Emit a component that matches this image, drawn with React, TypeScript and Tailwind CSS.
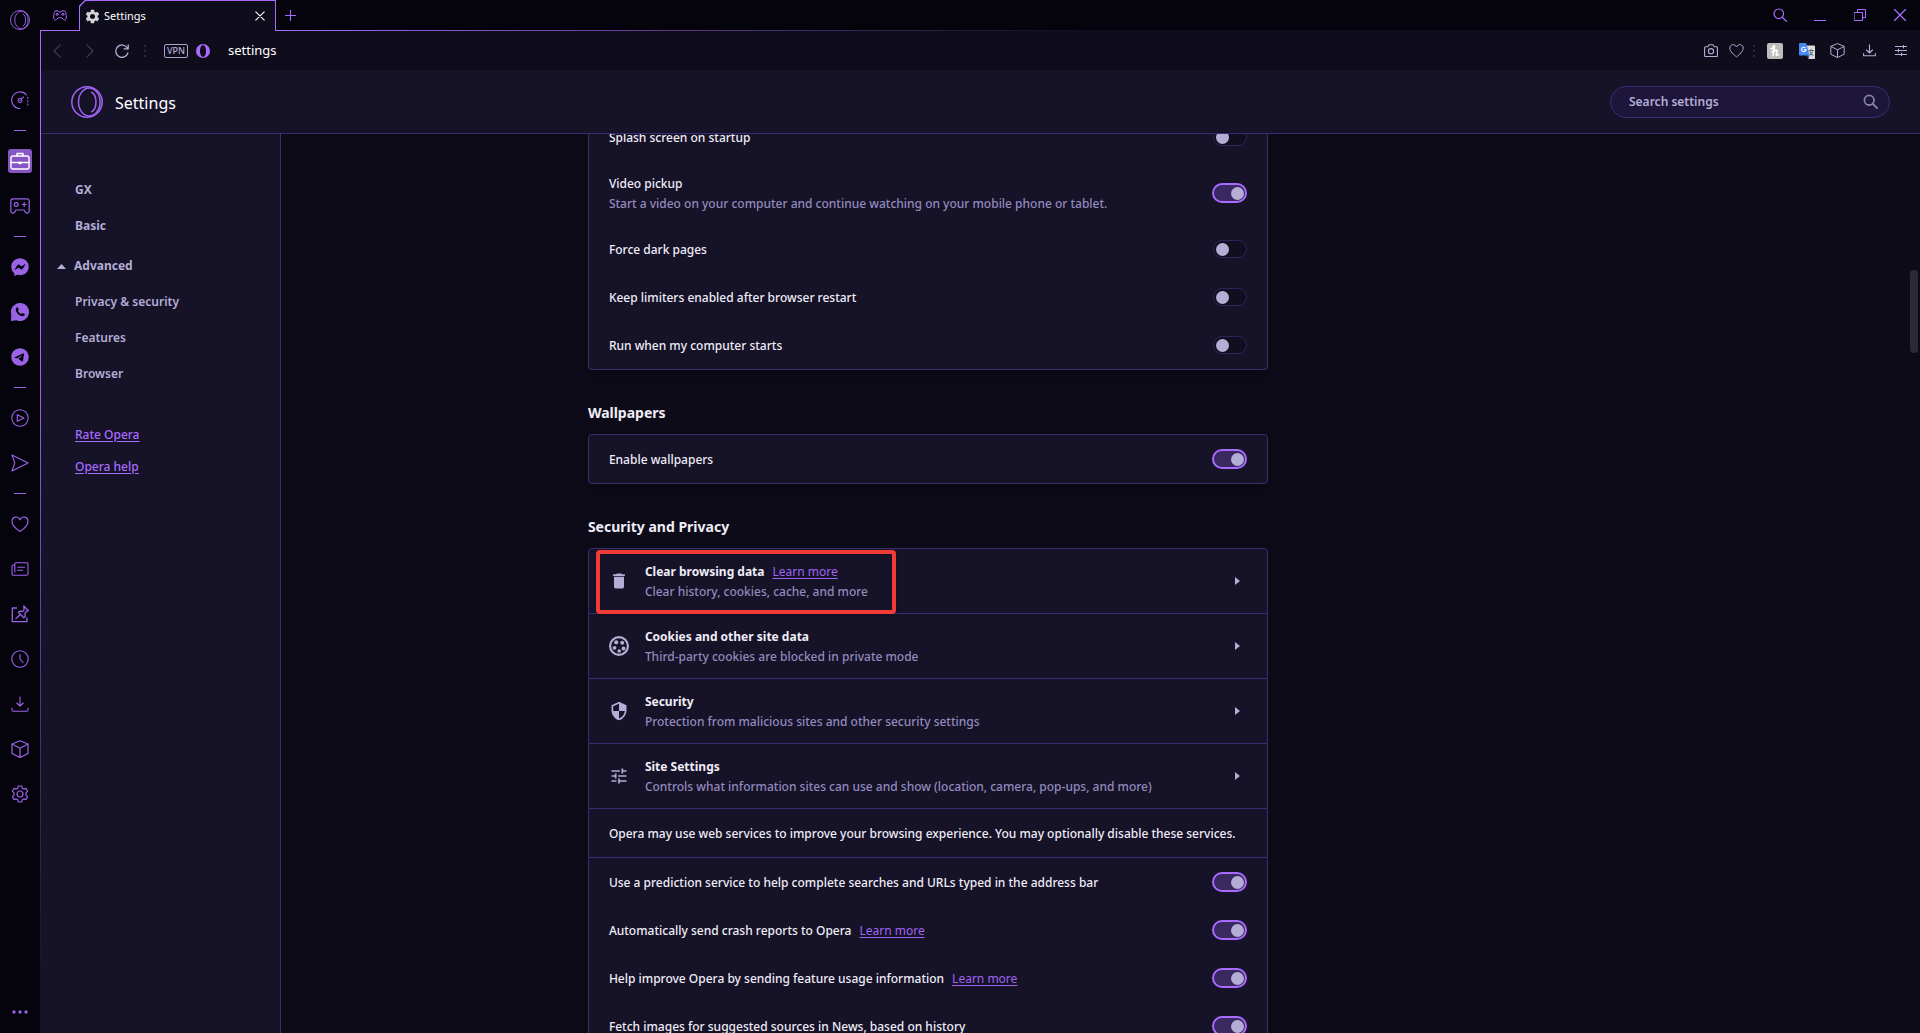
import { useState, type ReactNode } from 'react';
import { MdDelete, MdSecurity, MdTune, MdSettings } from 'react-icons/md';
import { FaFacebookMessenger, FaTelegram } from 'react-icons/fa6';

type IconProps = { w: number; h?: number; className?: string; sw?: number; children: ReactNode };

function Icon({ w, h = w, className, sw = 1.1, children }: IconProps) {
  return (
    <svg
      width={w}
      height={h}
      viewBox={`0 0 ${w} ${h}`}
      fill="none"
      stroke="currentColor"
      strokeWidth={sw}
      strokeLinecap="round"
      strokeLinejoin="round"
      className={className}
      aria-hidden="true"
    >
      {children}
    </svg>
  );
}

function OperaRing({ size }: { size: number }) {
  return (
    <svg width={size} height={size} viewBox="0 0 32 32" fill="none" stroke="currentColor" strokeWidth={1.5} aria-hidden="true">
      <circle cx="16" cy="16" r="15.200" />
      <ellipse cx="18.300" cy="16" rx="10.800" ry="14" />
      <path d="M20.300 6c3 1.500 4.700 5.800 4.700 10s-1.700 8.500-4.700 10" />
    </svg>
  );
}

const SpeedDial = () => (
  <Icon w={18}>
    <path d="M9 17.500A8.300 8.300 0 1 1 15.500 4" />
    <path d="M16.800 6.500v9" strokeDasharray="1 2.200" />
    <circle cx="9" cy="9.500" r="1.900" />
    <path d="M10.400 8.100 12.500 5.800M9 9.500h.1" />
  </Icon>
);
const Briefcase = () => (
  <Icon w={20} h={18} sw={1.4}>
    <rect x="1" y="4" width="18" height="13" rx="2" />
    <path d="M7 4V1.500h6V4M1 10.500h18" />
    <rect x="8.500" y="9.800" width="3" height="2.400" fill="currentColor" stroke="none" />
  </Icon>
);
const Gamepad = () => (
  <Icon w={20} h={16} sw={1.2}>
    <path d="M3 .800h14a2.200 2.200 0 0 1 2.200 2.200v9.800c0 2.600-3.200 3.200-4.200 1l-.900-1.800H5.900L5 13.800c-1 2.200-4.200 1.600-4.200-1V3A2.200 2.200 0 0 1 3 .800Z" />
    <circle cx="6.200" cy="6.500" r="1.900" />
    <path d="M14.200 4.500v4M12.200 6.500h4" />
  </Icon>
);
const WhatsApp = () => (
  <svg width={18} height={18} viewBox="0 0 18 18" aria-hidden="true">
    <path d="M9 0a9 9 0 1 1-3.600 17.250L0 18l.3-6.500A9 9 0 0 1 9 0Z" fill="currentColor" />
    <path
      d="M5.300 4.900c.5-.8 1.200-.8 1.500-.3l.9 1.800c.2.500-.7 1.200-.7 1.500.7 1.500 1.700 2.400 3.200 3 .4 0 .9-1 1.400-.8l1.900.9c.5.300.4 1-.2 1.500-1 .9-2.200 1-3.800.3-2-.9-3.500-2.500-4.300-4.300-.6-1.400-.5-2.700.1-3.600Z"
      fill="#05040d"
    />
  </svg>
);
const PlayCircle = () => (
  <Icon w={18}>
    <circle cx="9" cy="9" r="8.200" />
    <path d="M6.300 5.800 13 9l-6.700 3.200Z" />
  </Icon>
);
const Plane = () => (
  <Icon w={18}>
    <path d="M1 1l16 8-16 8 2.800-8Z" />
  </Icon>
);
const HeartIcon = ({ size = 18 }: { size?: number }) => (
  <svg width={size} height={size} viewBox="0 0 18 18" fill="none" stroke="currentColor" strokeWidth={1.2} strokeLinejoin="round" aria-hidden="true">
    <path d="M9 16.500C6 14.500 1 10 1 6.200 1 1.500 7 .400 9 4.700 11 .400 17 1.500 17 6.200 17 10 12 14.500 9 16.500Z" />
  </svg>
);
const News = () => (
  <Icon w={18} h={14}>
    <path d="M3.800 3H2.200A1.300 1.300 0 0 0 1 4.300V12a1 1 0 0 0 1.200 1.200M3.800 10V1.800a1 1 0 0 1 1-1H16a1 1 0 0 1 1 1V12a1.200 1.200 0 0 1-1.200 1.200H2.200" />
    <path d="M6.800 5.300h6.700M6.800 8.300h4.700" />
  </Icon>
);
const PinBoard = () => (
  <Icon w={18} sw={1.3}>
    <path d="M5.500 3H1.300v13.700H16V13" />
    <path d="m12.800 1 4.600 4.600-1.800.7-1.600 1.800.2 3.400-1.400 1.300-5.400-5.400 1.300-1.300 3.100.3 1.300-1.500ZM9.200 9.800 5 13.500" />
  </Icon>
);
const Clock = () => (
  <Icon w={18}>
    <circle cx="9" cy="9" r="8.200" />
    <path d="M9 4.500V9l3 3.500" />
  </Icon>
);
const Download = () => (
  <Icon w={18} h={16}>
    <path d="M9 .800v9M5.800 7 9 10l3.200-3M1 12v2a1.200 1.200 0 0 0 1.200 1.200h13.600A1.200 1.200 0 0 0 17 14v-2" />
  </Icon>
);
const Cube = ({ size = 18 }: { size?: number }) => (
  <svg width={size} height={size} viewBox="0 0 18 18" fill="none" stroke="currentColor" strokeWidth={1.2} strokeLinejoin="round" aria-hidden="true">
    <path d="M9 .700 17 4v9.500l-8 4-8-4V4ZM1 4l8 4.300L17 4M9 8.300v9" />
  </svg>
);
const Gear = () => (
  <Icon w={18} h={18} sw={1.2}>
    <path d="M7.300 1h3.400l.5 2.200 1.600.9 2.100-.7 1.700 2.900-1.600 1.600v2.200l1.600 1.600-1.700 2.900-2.100-.7-1.600.9-.5 2.200H7.300l-.5-2.200-1.600-.9-2.100.7-1.700-2.900L3 10.100V7.900L1.400 6.300l1.700-2.900 2.100.7 1.600-.9Z" />
    <circle cx="9" cy="9" r="3" />
  </Icon>
);
const Cookie = () => (
  <svg width={20} height={20} viewBox="0 0 20 20" fill="currentColor" aria-hidden="true">
    <circle cx="10" cy="10" r="8.900" fill="none" stroke="currentColor" strokeWidth="2.200" />
    <circle cx="7.200" cy="6.300" r="2.100" />
    <circle cx="13.200" cy="6.800" r="2" />
    <circle cx="5.500" cy="11.800" r="1.900" />
    <circle cx="14.500" cy="12.500" r="1.900" />
    <circle cx="10.200" cy="15" r="1.800" />
  </svg>
);

type RailEntry = { label: string; icon: ReactNode; active?: boolean } | null;

const rail: RailEntry[] = [
  { label: 'Speed Dial', icon: <SpeedDial /> },
  null,
  { label: 'Work', icon: <Briefcase />, active: true },
  { label: 'Games', icon: <Gamepad /> },
  null,
  { label: 'Messenger', icon: <FaFacebookMessenger size={18} /> },
  { label: 'WhatsApp', icon: <WhatsApp /> },
  { label: 'Telegram', icon: <FaTelegram size={18} /> },
  null,
  { label: 'Player', icon: <PlayCircle /> },
  { label: 'My Flow', icon: <Plane /> },
  null,
  { label: 'Bookmarks', icon: <HeartIcon /> },
  { label: 'News', icon: <News /> },
  { label: 'Pinboards', icon: <PinBoard /> },
  { label: 'History', icon: <Clock /> },
  { label: 'Downloads', icon: <Download /> },
  { label: 'Extensions', icon: <Cube /> },
  { label: 'Settings', icon: <Gear /> },
];

function Rail() {
  return (
    <aside className="flex w-10 shrink-0 flex-col items-center text-[#9a63e6]">
      <button aria-label="Opera menu" className="flex h-10 w-10 items-center justify-center">
        <OperaRing size={20} />
      </button>
      <nav aria-label="Sidebar" className="mt-[37px] flex flex-col items-center">
        {rail.map((entry, i) =>
          entry ? (
            <button key={entry.label} aria-label={entry.label} className="flex h-[45px] w-10 items-center justify-center">
              <span
                className={
                  entry.active
                    ? 'flex h-6 w-6 items-center justify-center rounded-[3px] bg-[#8555c4] text-white'
                    : 'flex items-center justify-center'
                }
              >
                {entry.icon}
              </span>
            </button>
          ) : (
            <span key={i} className="flex h-4 items-center">
              <span className="h-px w-3 bg-[#9a63e6]" />
            </span>
          ),
        )}
      </nav>
      <button aria-label="More" className="mt-auto mb-px flex h-10 w-10 items-center justify-center">
        <svg width="16" height="4" viewBox="0 0 16 4" fill="currentColor" aria-hidden="true">
          <circle cx="2" cy="2" r="1.700" />
          <circle cx="8" cy="2" r="1.700" />
          <circle cx="14" cy="2" r="1.700" />
        </svg>
      </button>
    </aside>
  );
}

function TabStrip() {
  return (
    <div className="flex h-[31px] shrink-0 text-[#a86bff]">
      <button aria-label="Workspaces" className="flex w-[39px] items-center justify-center border-b border-[#a86bff]">
        <Icon w={14} h={11} sw={1}>
          <path d="M3 .800h2l1 1.200h2l1-1.200h2c1.500 0 2.300 3 2.300 6.200 0 3.400-2 4-3.300 2L8.800 7.800H5.200L4 9C2.700 11 .700 10.400.700 7 .700 3.800 1.500.800 3 .800Z" />
          <circle cx="4" cy="4.300" r="1" />
          <circle cx="10" cy="4.300" r="1" />
        </Icon>
      </button>
      <div className="flex w-[197px] items-center rounded-tl-[6px] border-x border-t border-[#a86bff] bg-[#0f0c1b] pr-[9px] pl-1 text-white [corner-top-left-shape:bevel]">
        <MdSettings size={17} className="text-[#d4d4d4]" aria-hidden="true" />
        <span className="ml-[3px] flex-1 text-[11px]">Settings</span>
        <button aria-label="Close tab" className="flex h-3 w-3 items-center justify-center">
          <Icon w={10}>
            <path d="m.800.800 8.400 8.400M9.200.800.800 9.200" />
          </Icon>
        </button>
      </div>
      <div className="flex flex-1 flex-col">
        <div className="flex flex-1 items-center justify-between">
          <button aria-label="New tab" className="flex h-7 w-7 items-center justify-center">
            <Icon w={11}>
              <path d="M5.500.500v10M.500 5.500h10" />
            </Icon>
          </button>
          <div className="flex h-full">
            <button aria-label="Search tabs" className="flex w-10 items-center justify-center">
              <Icon w={14} sw={1.2}>
                <circle cx="5.800" cy="5.800" r="4.800" />
                <path d="m9.500 9.500 4 4" />
              </Icon>
            </button>
            <button aria-label="Minimize" className="flex w-10 items-center justify-center pt-[10px]">
              <span className="h-px w-3 bg-[#a86bff]" />
            </button>
            <button aria-label="Restore" className="flex w-10 items-center justify-center">
              <Icon w={12} sw={1}>
                <path d="M.500 3.500h8v8h-8ZM3.500 3.500v-3h8v8h-3" />
              </Icon>
            </button>
            <button aria-label="Close window" className="flex w-10 items-center justify-center">
              <Icon w={12} sw={1.2}>
                <path d="m.500.500 11 11M11.500.500l-11 11" />
              </Icon>
            </button>
          </div>
        </div>
        <div className="h-px bg-linear-to-r from-[#a86bff] to-[#0f0c1b] to-50%" />
      </div>
    </div>
  );
}

function Dots() {
  return (
    <span className="flex w-[10px] flex-col items-center gap-[3px]" aria-hidden="true">
      <span className="h-0.5 w-0.5 bg-[#2d2940]" />
      <span className="h-0.5 w-0.5 bg-[#2d2940]" />
      <span className="h-0.5 w-0.5 bg-[#2d2940]" />
    </span>
  );
}

function Toolbar() {
  return (
    <div className="flex h-[39px] shrink-0 items-center bg-[#0f0c1b] pr-[3px] text-[#b4add6]">
      <button aria-label="Back" className="flex h-8 w-8 items-center justify-center text-[#413b58]">
        <Icon w={8} h={14}>
          <path d="M7.200.800 1 7l6.200 6.200" />
        </Icon>
      </button>
      <button aria-label="Forward" className="flex h-8 w-[33px] items-center justify-center text-[#413b58]">
        <Icon w={8} h={14}>
          <path d="M.800.800 7 7 .800 13.200" />
        </Icon>
      </button>
      <button aria-label="Reload" className="flex h-8 w-[31px] items-center justify-center">
        <Icon w={14} sw={1.3}>
          <path d="M12.900 9A6.200 6.200 0 1 1 12.300 4M13.200.800v4H9" />
        </Icon>
      </button>
      <span className="flex w-4 justify-center">
        <Dots />
      </span>
      <button className="ml-[11px] flex h-[14px] w-6 items-center justify-center rounded-[2px] border border-[#a9a2cf] text-[9px] leading-none font-medium">
        VPN
      </button>
      <svg width="14" height="14" viewBox="0 0 14 14" className="ml-2 text-[#a86bff]" aria-hidden="true">
        <path fillRule="evenodd" fill="currentColor" d="M7 0a7 7 0 1 1 0 14A7 7 0 0 1 7 0Zm0 1.200c-2 0-3 2.700-3 5.800s1 5.800 3 5.800 3-2.700 3-5.800-1-5.800-3-5.800Z" />
      </svg>
      <input
        aria-label="Address"
        defaultValue="settings"
        className="ml-[18px] min-w-0 flex-1 bg-transparent text-[13px] text-white outline-none"
      />
      <button aria-label="Snapshot" className="flex h-8 w-[26px] items-center justify-center">
        <Icon w={14} h={13}>
          <path d="M1.500 2.800h2.300L5 .800h4l1.200 2h2.300a.9.900 0 0 1 .9.900v8a.8.800 0 0 1-.8.800H1.400a.8.800 0 0 1-.8-.8v-8a.9.900 0 0 1 .9-.9Z" />
          <circle cx="7" cy="7.200" r="2.600" />
        </Icon>
      </button>
      <button aria-label="Bookmark" className="flex h-8 w-[25px] items-center justify-center">
        <HeartIcon size={15} />
      </button>
      <Dots />
      <button aria-label="Honey" className="flex h-8 w-8 items-center justify-center">
        <svg width="16" height="16" viewBox="0 0 16 16" aria-hidden="true">
          <rect width="16" height="16" rx="2" fill="#bdbdbd" />
          <path d="M4 5.500c1.500.500 3-1.300 2.500-2.500M7.500 3 6 12.500M6.600 9C8 6.500 10.500 6.500 10 8.500l-.8 2.700c-.2 1.200 1 1.500 2.300.300M5 8.500h2" fill="none" stroke="#fff" strokeWidth="1.700" strokeLinecap="round" />
        </svg>
      </button>
      <button aria-label="Translate" className="flex h-8 w-[31px] items-center justify-center">
        <svg width="16" height="16" viewBox="0 0 16 16" aria-hidden="true">
          <path d="M7 2.500h8.200a.8.800 0 0 1 .8.800v11.900a.8.800 0 0 1-.8.800H9.500Z" fill="#dcdcdc" />
          <path d="M9.500 7.500h5.500M12 6v1.500M13.800 7.500c-.5 2.500-2 4-3.500 5M10.800 8.500c.7 2 2 3.200 3.500 4" fill="none" stroke="#5d7076" strokeWidth="1.100" />
          <path d="M.800 0h6.400l3.300 12.500H.800a.8.800 0 0 1-.8-.8V.800A.8.800 0 0 1 .800 0Z" fill="#4688f1" />
          <path d="M8 12.500h2.500L9.500 16Z" fill="#2f5fc4" />
          <path d="M6.500 5A2.200 2.200 0 1 0 7 6.600H4.900" fill="none" stroke="#fff" strokeWidth="1.100" />
        </svg>
      </button>
      <button aria-label="Extensions" className="flex h-8 w-[31px] items-center justify-center">
        <Cube size={15} />
      </button>
      <button aria-label="Downloads" className="flex h-8 w-8 items-center justify-center">
        <Icon w={13} h={13}>
          <path d="M6.500.800v8M3.500 6l3 3 3-3M.600 9.500v2.300h11.800V9.500" />
        </Icon>
      </button>
      <button aria-label="Easy setup" className="flex h-8 w-8 items-center justify-center">
        <Icon w={12} h={11} sw={1}>
          <path d="M0 1.500h12M0 5.500h12M0 9.500h12M8.500 0v3M3.500 4v3M6.500 8v3" />
        </Icon>
      </button>
    </div>
  );
}

function PageHeader() {
  return (
    <header className="flex h-16 shrink-0 items-center border-b border-[#392d6f] bg-[#161228] pr-[30px] pl-[30px]">
      <span className="text-[#a065f2]">
        <OperaRing size={32} />
      </span>
      <h1 className="ml-3 flex-1 pt-0.5 text-base text-white">Settings</h1>
      <label className="flex h-8 w-[280px] items-center rounded-full border border-[#392d6f] bg-[#1d163a] pr-[11px] pl-[18px] text-[#8980b0]">
        <input
          aria-label="Search settings"
          placeholder="Search settings"
          className="min-w-0 flex-1 bg-transparent text-xs font-semibold text-white outline-none placeholder:text-[#b4add6]"
        />
        <Icon w={15} sw={1.8}>
          <circle cx="6.200" cy="6.200" r="4.800" />
          <path d="m9.800 9.800 4.200 4.200" />
        </Icon>
      </label>
    </header>
  );
}

function SideNav() {
  const row = 'flex h-9 items-center pl-[34px]';
  return (
    <nav aria-label="Settings sections" className="w-60 shrink-0 border-r border-[#392d6f] bg-[#161228] pt-[38px] text-xs text-[#b4add6]">
      <a href="#gx" className={`${row} font-bold`}>GX</a>
      <a href="#basic" className={`${row} font-bold`}>Basic</a>
      <button className="mt-1 flex h-9 items-center gap-2 pl-4 font-bold">
        <svg width="9" height="5" viewBox="0 0 9 5" fill="currentColor" aria-hidden="true">
          <path d="M4.500 0 9 5H0Z" />
        </svg>
        Advanced
      </button>
      <a href="#privacy" className={`${row} font-semibold`}>Privacy &amp; security</a>
      <a href="#features" className={`${row} font-semibold`}>Features</a>
      <a href="#browser" className={`${row} font-semibold`}>Browser</a>
      <div className="mt-[27px] flex flex-col items-start pl-[34px] font-medium text-[#a86bff] underline underline-offset-2">
        <a href="#rate" className="flex h-8 items-center">Rate Opera</a>
        <a href="#help" className="flex h-8 items-center">Opera help</a>
      </div>
    </nav>
  );
}

function LearnMore() {
  return (
    <a href="#learn" className="ml-2 font-normal text-[#a065f2] underline underline-offset-2">
      Learn more
    </a>
  );
}

function ToggleRow({ id, label, detail, on = false, learn = false }: { id: string; label: string; detail?: string; on?: boolean; learn?: boolean }) {
  const [checked, setChecked] = useState(on);
  return (
    <div className={detail ? 'flex h-16 items-center justify-between px-5' : 'flex h-12 items-center justify-between px-5'}>
      <div className="pt-0.5 leading-5">
        <label htmlFor={id} className="font-medium">{label}</label>
        {learn && <LearnMore />}
        {detail && <p className="font-medium text-[#938abd]">{detail}</p>}
      </div>
      <input
        id={id}
        type="checkbox"
        checked={checked}
        onChange={(e) => setChecked(e.target.checked)}
        className="flex h-[18px] w-[34px] shrink-0 appearance-none items-center rounded-full border border-[#2c2356] bg-[#120e20] px-0.5 before:h-[13px] before:w-[13px] before:rounded-full before:bg-[#b4add6] checked:h-5 checked:w-[35px] checked:justify-end checked:border-2 checked:border-[#a86bff] checked:bg-[#3a2860] checked:px-px"
      />
    </div>
  );
}

function LinkRow({ icon, title, detail, learn = false, marked = false }: { icon: ReactNode; title: string; detail: string; learn?: boolean; marked?: boolean }) {
  return (
    <div className="relative flex h-[65px] items-center border-b border-[#392d6f] px-5">
      <span className="flex w-5 justify-center text-[#b4add6]">{icon}</span>
      <div className="ml-4 flex-1 pt-0.5 leading-5">
        <span className="font-bold">{title}</span>
        {learn && <LearnMore />}
        <p className="font-medium text-[#938abd]">{detail}</p>
      </div>
      <button aria-label={title} className="mr-[7px] text-[#b4add6]">
        <svg width="5" height="8" viewBox="0 0 5 8" fill="currentColor" aria-hidden="true">
          <path d="M0 0 5 4 0 8Z" />
        </svg>
      </button>
      {marked && (
        <span className="pointer-events-none absolute top-px left-[7px] h-16 w-[300px] rounded-[4px] border-4 border-[#f23b36] shadow-md" />
      )}
    </div>
  );
}

const card = 'rounded-[4px] border border-[#392d6f] bg-[#161228] shadow-[0_6px_16px_rgba(0,0,0,0.3)]';
const heading = 'flex h-16 items-center pb-1.5 pt-7 text-sm font-bold';

function SettingsList() {
  return (
    <main className="-mt-[21px] w-[680px] shrink-0 text-xs text-[#efedf6]">
      <section className={card + ' border-t-0'}>
        <ToggleRow id="splash" label="Splash screen on startup" />
        <ToggleRow id="video" label="Video pickup" detail="Start a video on your computer and continue watching on your mobile phone or tablet." on />
        <ToggleRow id="dark" label="Force dark pages" />
        <ToggleRow id="limiters" label="Keep limiters enabled after browser restart" />
        <ToggleRow id="startup" label="Run when my computer starts" />
      </section>

      <h2 className={heading}>Wallpapers</h2>
      <section className={card}>
        <ToggleRow id="wallpapers" label="Enable wallpapers" on />
      </section>

      <h2 className={heading}>Security and Privacy</h2>
      <section className={card}>
        <LinkRow icon={<MdDelete size={20} />} title="Clear browsing data" detail="Clear history, cookies, cache, and more" learn marked />
        <LinkRow icon={<Cookie />} title="Cookies and other site data" detail="Third-party cookies are blocked in private mode" />
        <LinkRow icon={<MdSecurity size={20} />} title="Security" detail="Protection from malicious sites and other security settings" />
        <LinkRow icon={<MdTune size={20} />} title="Site Settings" detail="Controls what information sites can use and show (location, camera, pop-ups, and more)" />
        <p className="flex h-[49px] items-center border-b border-[#392d6f] px-5 pt-0.5 font-medium">
          Opera may use web services to improve your browsing experience. You may optionally disable these services.
        </p>
        <ToggleRow id="prediction" label="Use a prediction service to help complete searches and URLs typed in the address bar" on />
        <ToggleRow id="crash" label="Automatically send crash reports to Opera" on learn />
        <ToggleRow id="usage" label="Help improve Opera by sending feature usage information" on learn />
        <ToggleRow id="news" label="Fetch images for suggested sources in News, based on history" on />
      </section>
    </main>
  );
}

export default function App() {
  return (
    <div className="flex h-screen overflow-hidden bg-[#05040d] font-['Noto_Sans',sans-serif]">
      <Rail />
      <div className="flex min-w-0 flex-1 flex-col">
        <TabStrip />
        <div className="flex min-h-0 flex-1">
          <div className="w-px bg-linear-to-b from-[#a86bff] from-30% to-[#161228] to-95%" />
          <div className="flex min-w-0 flex-1 flex-col">
            <Toolbar />
            <PageHeader />
            <div className="flex min-h-0 flex-1 overflow-hidden bg-[#0e0b19]">
              <SideNav />
              <div className="flex min-w-0 flex-1 items-start overflow-hidden">
                <div className="flex-[8]" />
                <SettingsList />
                <div className="flex-[17]" />
              </div>
              <div className="-ml-[10px] w-[10px] shrink-0 pt-[136px]" aria-hidden="true">
                <div className="h-[83px] w-2 rounded-full bg-[#2d2a38]" />
              </div>
            </div>
          </div>
        </div>
      </div>
    </div>
  );
}
